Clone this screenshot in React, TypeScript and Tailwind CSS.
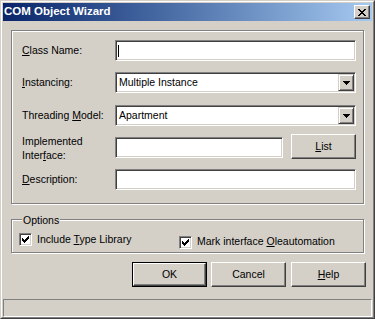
const sunken =
  "border border-t-[#808080] border-l-[#808080] border-r-white border-b-white shadow-[inset_1px_1px_0_#404040,inset_-1px_-1px_0_#d4d0c8] bg-white";
const raised =
  "border border-t-white border-l-white border-r-[#404040] border-b-[#404040] shadow-[inset_-1px_-1px_0_#808080] bg-[#d4d0c8]";
const etched =
  "border border-[#808080] shadow-[1px_1px_0_#fff,inset_1px_1px_0_#fff]";

const closeGlyph = [
  "XX....XX",
  ".XX..XX.",
  "..XXXX..",
  "...XX...",
  "..XXXX..",
  ".XX..XX.",
  "XX....XX",
];

const checkGlyph = [
  "......X",
  ".....XX",
  "X...XXX",
  "XX.XXX.",
  "XXXXX..",
  ".XXX...",
  "..X....",
];

function Glyph({ rows }: { rows: string[] }) {
  const w = rows[0].length;
  const h = rows.length;
  return (
    <svg width={w} height={h} viewBox={`0 0 ${w} ${h}`} shapeRendering="crispEdges">
      {rows.map((row, y) =>
        row.split("").map((c, x) =>
          c === "X" ? <rect key={`${x}-${y}`} x={x} y={y} width={1} height={1} fill="#000" /> : null
        )
      )}
    </svg>
  );
}

function Arrow() {
  return (
    <svg width="7" height="4" viewBox="0 0 7 4" shapeRendering="crispEdges">
      <rect x="0" y="0" width="7" height="1" fill="#000" />
      <rect x="1" y="1" width="5" height="1" fill="#000" />
      <rect x="2" y="2" width="3" height="1" fill="#000" />
      <rect x="3" y="3" width="1" height="1" fill="#000" />
    </svg>
  );
}

function Combo({ value }: { value: string }) {
  return (
    <div className={`${sunken} flex-1 h-full flex items-stretch p-[1px]`}>
      <div className="flex-1 flex items-center pl-[2px]">{value}</div>
      <div className="w-[16px] flex items-center justify-center border border-t-[#d4d0c8] border-l-[#d4d0c8] border-r-[#404040] border-b-[#404040] shadow-[inset_1px_1px_0_#fff,inset_-1px_-1px_0_#808080] bg-[#d4d0c8]">
        <Arrow />
      </div>
    </div>
  );
}

function Check({ children }: { children: React.ReactNode }) {
  return (
    <div className="flex items-center">
      <div className={`${sunken} w-[13px] h-[13px] flex items-center justify-center`}>
        <Glyph rows={checkGlyph} />
      </div>
      <span className="ml-[5px]">{children}</span>
    </div>
  );
}

function Btn({ children, primary }: { children: React.ReactNode; primary?: boolean }) {
  if (primary) {
    return (
      <div className="w-[75px] h-[25px] border border-black flex">
        <div className={`${raised} flex-1 flex items-center justify-center`}>{children}</div>
      </div>
    );
  }
  return <div className={`${raised} w-[75px] h-[25px] flex items-center justify-center`}>{children}</div>;
}

export default function App() {
  return (
    <div className="w-[375px] h-[319px] overflow-hidden bg-[#d4d0c8] border border-t-[#d4d0c8] border-l-[#d4d0c8] border-r-[#404040] border-b-[#404040] font-['Liberation_Sans',Arial,sans-serif] text-[10.5px] text-black">
      <div className="h-full border border-t-white border-l-white border-r-[#808080] border-b-[#808080] px-px pt-px flex flex-col">
        {/* Title bar */}
        <div className="h-[18px] shrink-0 flex items-center justify-between pl-[1px] pr-[2px] bg-gradient-to-r from-[#0a246a] to-[#a6caf0]">
          <span className="text-white font-bold text-[11.5px] leading-none">COM Object Wizard</span>
          <div className={`${raised} w-[16px] h-[14px] flex items-center justify-center`}>
            <Glyph rows={closeGlyph} />
          </div>
        </div>

        {/* Body */}
        <div className="flex-1 flex flex-col px-[8px] pt-[9px]">
          <div className={`${etched} h-[174px] shrink-0 flex flex-col pl-[10px] pr-[7px] pt-[9px]`}>
            <div className="h-[21px] flex items-center">
              <span className="w-[93px]">
                <span className="underline">C</span>lass Name:
              </span>
              <div className={`${sunken} flex-1 h-full flex items-center pl-[2px]`}>
                <div className="w-px h-[12px] bg-black" />
              </div>
            </div>
            <div className="h-[21px] mt-[11px] flex items-center">
              <span className="w-[93px]">
                <span className="underline">I</span>nstancing:
              </span>
              <Combo value="Multiple Instance" />
            </div>
            <div className="h-[21px] mt-[12px] flex items-center">
              <span className="w-[93px]">
                Threading <span className="underline">M</span>odel:
              </span>
              <Combo value="Apartment" />
            </div>
            <div className="h-[25px] mt-[8px] flex items-center">
              <span className="w-[93px] leading-[14px] pt-[3px]">
                Implemented
                <br />
                Inter<span className="underline">f</span>ace:
              </span>
              <div className={`${sunken} flex-1 h-[21px] mt-[1px]`} />
              <div className="ml-[8px]">
                <div className={`${raised} w-[65px] h-[25px] flex items-center justify-center`}>
                  <span>
                    <span className="underline">L</span>ist
                  </span>
                </div>
              </div>
            </div>
            <div className="h-[21px] mt-[10px] flex items-center">
              <span className="w-[93px]">
                <span className="underline">D</span>escription:
              </span>
              <div className={`${sunken} flex-1 h-full`} />
            </div>
          </div>

          {/* Options */}
          <div className={`${etched} relative h-[34px] shrink-0 mt-[15px] flex pl-[7px] pt-[12px]`}>
            <span className="absolute left-[10px] top-[-7px] px-[1px] bg-[#d4d0c8]">Options</span>
            <div className="w-[160px]">
              <Check>
                Include <span className="underline">T</span>ype Library
              </Check>
            </div>
            <Check>
              Mark interface <span className="underline">O</span>leautomation
            </Check>
          </div>

          {/* Buttons */}
          <div className="h-[25px] shrink-0 mt-[9px] -mr-[2px] flex justify-end gap-[4px]">
            <Btn primary>OK</Btn>
            <Btn>Cancel</Btn>
            <div className="ml-px">
              <Btn>
                <span className="underline">H</span>elp
              </Btn>
            </div>
          </div>

          {/* Status bar */}
          <div className="h-[18px] shrink-0 mt-[12px] -mx-[8px] border border-t-[#808080] border-l-[#808080] border-r-white border-b-white" />
        </div>
      </div>
    </div>
  );
}
